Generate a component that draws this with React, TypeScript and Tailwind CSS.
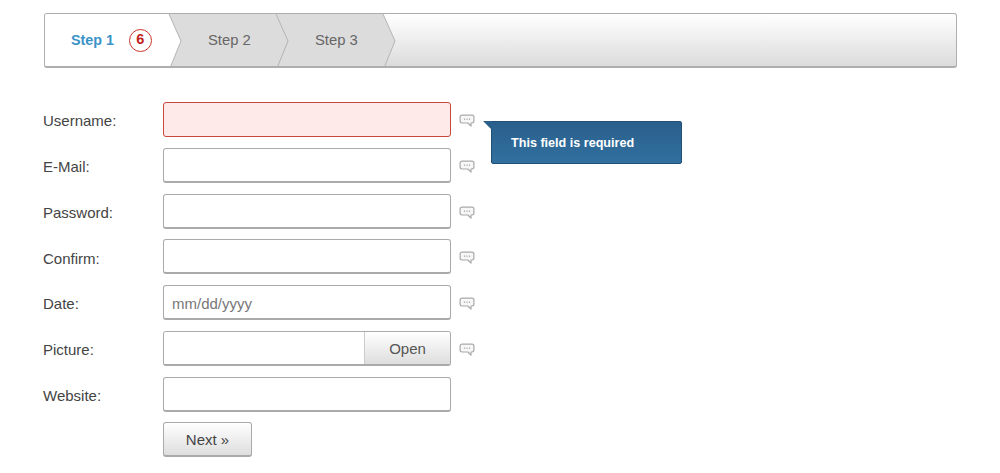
const fields = [
  { label: "Username:", error: true },
  { label: "E-Mail:" },
  { label: "Password:" },
  { label: "Confirm:" },
  { label: "Date:", placeholder: "mm/dd/yyyy" },
  { label: "Picture:", file: true },
  { label: "Website:", noHint: true },
];

function HintIcon() {
  return (
    <svg width="16" height="14" viewBox="0 0 16 14" className="ml-[8px] mt-[3px] shrink-0">
      <path
        d="M3 1.2h10c1.1 0 1.9.8 1.9 1.9v4c0 1.1-.8 1.9-1.9 1.900h-1v3.200L8.800 9H3C1.900 9 1.100 8.200 1.100 7.100v-4C1.100 2 1.900 1.200 3 1.200z"
        fill="#f7f7f7"
        stroke="#a9a9a9"
        strokeWidth="1.2"
        strokeLinejoin="round"
      />
      <circle cx="5.500" cy="5.100" r=".7" fill="#8a8a8a" />
      <circle cx="8" cy="5.100" r=".7" fill="#8a8a8a" />
      <circle cx="10.500" cy="5.100" r=".7" fill="#8a8a8a" />
    </svg>
  );
}

function StepShape({ fill, width }: { fill: string; width: number }) {
  return (
    <svg width={width} height="54" viewBox={`0 0 ${width} 54`} className="absolute left-0 top-0">
      <path
        d={`M0 0H${width - 13}L${width - 1} 27L${width - 12} 54H0Z`}
        fill={fill}
      />
      <path
        d={`M${width - 13} 0L${width - 1} 27L${width - 12} 54`}
        fill="none"
        stroke="#b4b4b4"
        strokeWidth="1"
      />
    </svg>
  );
}

export default function App() {
  return (
    <div className="w-[1000px] h-[473px] overflow-hidden bg-white pt-[13px] pl-[44px] font-['Liberation_Sans',Arial,sans-serif] text-[15px] text-[#444]">
      <div className="flex h-[55px] w-[913px] overflow-hidden rounded-[3px] border border-[#aeaeae] border-b-2 bg-gradient-to-b from-white to-[#dcdcdc]">
        <div className="relative z-30 flex h-full w-[124px] items-center">
          <div className="absolute left-0 top-0 h-full w-[137px]">
            <StepShape fill="#ffffff" width={137} />
          </div>
          <span className="relative ml-[26px] mt-[1px] text-[14.300px] font-bold text-[#3a93c8]">Step 1</span>
          <span className="relative ml-[15px] flex h-[23px] w-[23px] items-center justify-center rounded-full border border-[#c9342c] text-[14.500px] font-bold text-[#c0231c]">
            6
          </span>
        </div>
        <div className="relative z-20 flex h-full w-[107px] items-center">
          <div className="absolute left-0 top-0 h-full w-[120px]">
            <StepShape fill="#dcdcdc" width={120} />
          </div>
          <span className="relative ml-[39px] text-[14.800px] text-[#666]">Step 2</span>
        </div>
        <div className="relative z-10 flex h-full w-[107px] items-center">
          <div className="absolute left-0 top-0 h-full w-[120px]">
            <StepShape fill="#dcdcdc" width={120} />
          </div>
          <span className="relative ml-[39px] text-[14.800px] text-[#666]">Step 3</span>
        </div>
      </div>

      <form className="mt-[34.200px] flex flex-col gap-[10.750px]">
        {fields.map((f) => (
          <div key={f.label} className="relative flex h-[35px] items-center">
            <label className="-ml-px mt-[4px] w-[120px] shrink-0 text-[#444]">{f.label}</label>
            {f.file ? (
              <div className="flex h-full w-[288px] overflow-hidden rounded-[3px] border border-[#aaa] border-b-2">
                <div className="flex-1 bg-white" />
                <div className="flex w-[86px] items-center justify-center border-l border-[#ccc] bg-gradient-to-b from-white to-[#dedede] pt-[3px] text-[#555]">
                  Open
                </div>
              </div>
            ) : (
              <input
                readOnly
                placeholder={f.placeholder}
                className={
                  f.error
                    ? "h-full w-[288px] rounded-[3px] border border-[#c8473f] bg-[#ffeaea] px-2 outline-none"
                    : "h-full w-[288px] rounded-[3px] border border-[#aaa] border-b-2 bg-white px-2 pt-[2px] text-[15px] outline-none placeholder:text-[#777]"
                }
              />
            )}
            {!f.noHint && <HintIcon />}
            {f.error && (
              <div className="absolute left-[447px] top-[19px] h-[43px] w-[191px] rounded-[2px] rounded-tl-none border border-[#214f76] bg-gradient-to-b from-[#2a5f8c] to-[#31709f] pl-[19px] text-[12.600px] leading-[43px] font-bold text-white">
                <svg width="9" height="9" viewBox="0 0 9 9" className="absolute left-[-9px] top-[-1px]">
                  <path d="M0 0H9V9Z" fill="#2a5f8c" />
                </svg>
                This field is required
              </div>
            )}
          </div>
        ))}
        <div className="flex h-[35px]">
          <button
            type="button"
            className="ml-[119px] h-full w-[89px] rounded-[3px] border border-[#aaa] border-b-2 bg-gradient-to-b from-white to-[#dedede] pt-[1px] text-[15px] text-[#444]"
          >
            Next »
          </button>
        </div>
      </form>
    </div>
  );
}
